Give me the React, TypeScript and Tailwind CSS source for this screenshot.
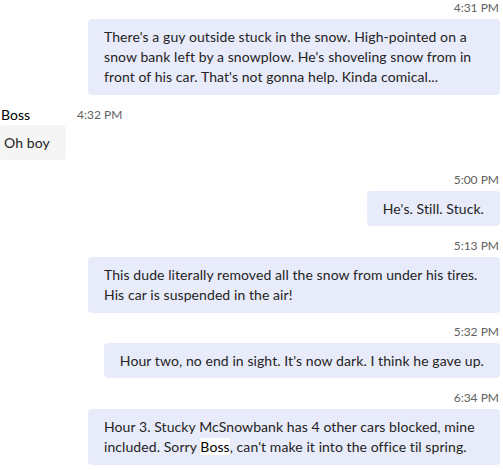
import React from 'react';

interface Msg {
  time: string;
  body: React.ReactNode;
  single?: boolean;
  gap?: string;
}

const mine: Msg[] = [
  { time: '5:00 PM', body: "He's. Still. Stuck.", single: true, gap: 'mt-3' },
  { time: '5:13 PM', body: 'This dude literally removed all the snow from under his tires. His car is suspended in the air!', gap: 'mt-3' },
  { time: '5:32 PM', body: "Hour two, no end in sight. It's now dark. I think he gave up.", single: true, gap: 'mt-[11px]' },
  {
    time: '6:34 PM',
    gap: 'mt-3',
    body: (
      <>
        Hour 3. Stucky McSnowbank has 4 other cars blocked, mine included. Sorry{' '}
        <span className="bg-white text-black">Boss</span>, can't make it into the office til spring.
      </>
    ),
  },
];

const MyMessage: React.FC<{ msg: Msg }> = ({ msg }) => (
  <div className={`flex flex-col items-end ${msg.gap ?? ''}`}>
    <div className="h-4 pr-px text-xs leading-4 text-[#616161]">{msg.time}</div>
    <div
      className={`mt-[3px] max-w-[412px] rounded-[4px] bg-[#e8ebfa] px-4 pt-2 text-sm leading-5 tracking-[0.08px] text-[#242424] ${
        msg.single ? 'pb-[7px]' : 'pb-2'
      }`}
    >
      {msg.body}
    </div>
  </div>
);

export default function App() {
  return (
    <div className="h-[470px] w-[503px] overflow-hidden bg-white pr-[3px] font-['Segoe_UI','Lato',sans-serif]">
      <MyMessage
        msg={{
          time: '4:31 PM',
          body: "There's a guy outside stuck in the snow. High-pointed on a snow bank left by a snowplow. He's shoveling snow from in front of his car. That's not gonna help. Kinda comical...",
        }}
      />

      {/* incoming */}
      <div className="mt-[10px] flex flex-col items-start">
        <div className="flex h-5 items-center">
          <span className="w-[77px] pl-px text-sm leading-5 text-black">Boss</span>
          <span className="text-xs text-[#616161]">4:32 PM</span>
        </div>
        <div className="rounded-[4px] bg-[#f5f5f5] pb-[7px] pl-1 pr-4 pt-2 text-sm leading-5 tracking-[0.08px] text-[#242424]">
          Oh boy
        </div>
      </div>

      {mine.map((m) => (
        <MyMessage key={m.time} msg={m} />
      ))}
    </div>
  );
}
